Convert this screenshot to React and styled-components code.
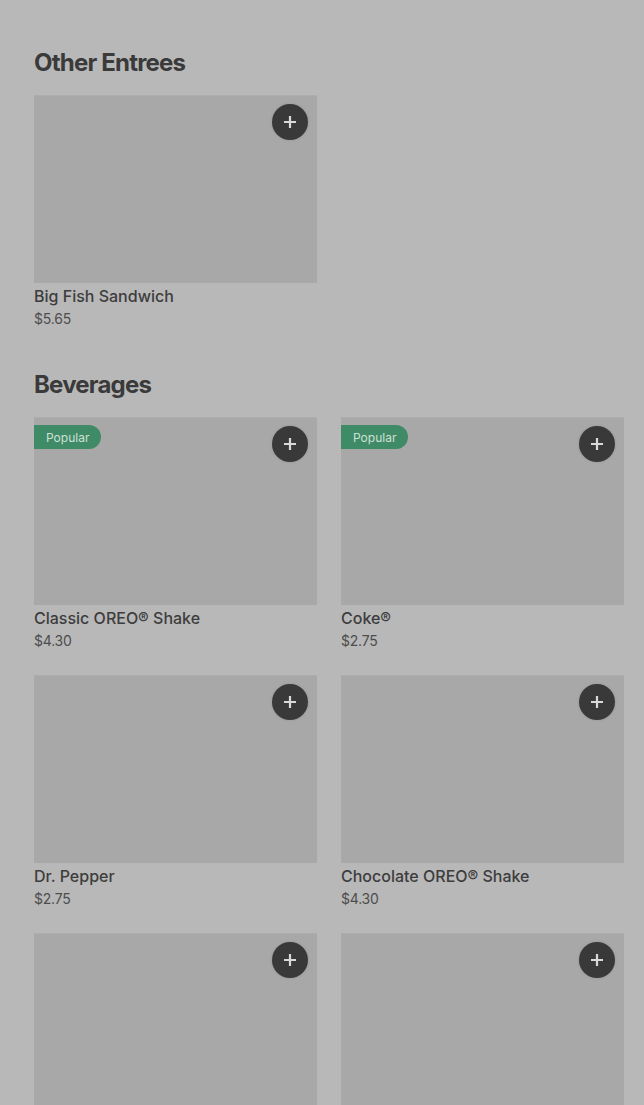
import React from "react";
import styled, { createGlobalStyle } from "styled-components";

const GlobalStyle = createGlobalStyle`
  html, body {
    margin: 0;
    padding: 0;
    background: #b8b8b8;
  }
  body {
    font-family: Inter, "Noto Sans", "Liberation Sans", sans-serif;
    color: #3b3b3b;
  }
`;

const Page = styled.div`
  height: 100vh;
  overflow: hidden;
  box-sizing: border-box;
  padding: 47px 20px 0 34px;
  display: flex;
  flex-direction: column;
  gap: 40px;
`;

const Section = styled.section`
  display: flex;
  flex-direction: column;
  flex-shrink: 0;
`;

const Heading = styled.h2`
  margin: 0 0 16px;
  font-size: 24px;
  line-height: 32px;
  font-weight: 700;
  letter-spacing: -0.8px;
  color: #3a3a3a;
`;

const Grid = styled.div`
  display: grid;
  grid-template-columns: repeat(2, 283px);
  column-gap: 24px;
  row-gap: 24px;
`;

const Card = styled.div`
  display: flex;
  flex-direction: column;
`;

const Thumb = styled.div`
  position: relative;
  height: 188px;
  background: #a8a8a8;
  box-shadow: inset 0 1px 0 #adadad;
`;

const Badge = styled.span`
  position: absolute;
  top: 8px;
  left: 0;
  height: 24px;
  padding: 0 12px;
  display: flex;
  align-items: center;
  background: #3f8a67;
  color: #cfe0d6;
  font-size: 12px;
  border-radius: 0 12px 12px 0;
`;

const AddButton = styled.button`
  position: absolute;
  top: 9px;
  right: 9px;
  width: 36px;
  height: 36px;
  border: none;
  border-radius: 50%;
  background: #393939;
  box-shadow: 0 0 3px rgba(0, 0, 0, 0.12);
  display: flex;
  align-items: center;
  justify-content: center;
  padding: 0;
  cursor: pointer;
`;

const Title = styled.div`
  margin-top: 3px;
  font-size: 16px;
  line-height: 20px;
  font-weight: 500;
  color: #3d3d3d;
`;

const Price = styled.div`
  margin-top: 3px;
  font-size: 14px;
  line-height: 20px;
  color: #4d4d4d;
  letter-spacing: -0.2px;
`;

const Plus = () => (
  <svg width="14" height="14" viewBox="0 0 14 14">
    <path d="M7 1v12M1 7h12" stroke="#d9d9d9" strokeWidth="2.2" />
  </svg>
);

const sections = [
  {
    name: "Other Entrees",
    items: [{ id: 1, title: "Big Fish Sandwich", price: "$5.65" }]
  },
  {
    name: "Beverages",
    items: [
      { id: 2, title: "Classic OREO® Shake", price: "$4.30", popular: true },
      { id: 3, title: "Coke®", price: "$2.75", popular: true },
      { id: 4, title: "Dr. Pepper", price: "$2.75" },
      { id: 5, title: "Chocolate OREO® Shake", price: "$4.30" },
      { id: 6 },
      { id: 7 }
    ]
  }
];

export default function App() {
  return (
    <>
      <GlobalStyle />
      <Page>
        {sections.map(section => (
          <Section key={section.name}>
            <Heading>{section.name}</Heading>
            <Grid>
              {section.items.map(item => (
                <Card key={item.id}>
                  <Thumb>
                    {item.popular && <Badge>Popular</Badge>}
                    <AddButton aria-label="Add">
                      <Plus />
                    </AddButton>
                  </Thumb>
                  {item.title && <Title>{item.title}</Title>}
                  {item.price && <Price>{item.price}</Price>}
                </Card>
              ))}
            </Grid>
          </Section>
        ))}
      </Page>
    </>
  );
}
